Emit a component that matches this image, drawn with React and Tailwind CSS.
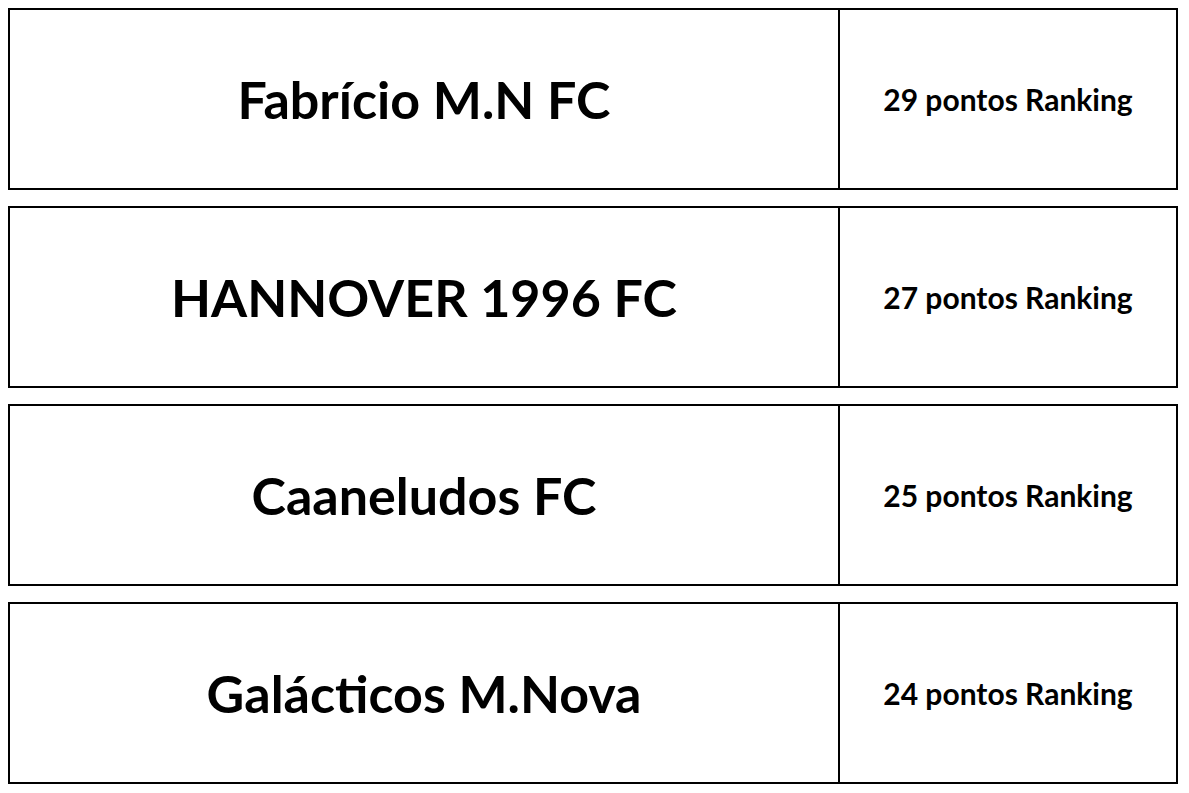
import React from 'react';

const teams = [
  { name: 'Fabrício M.N FC', points: 29 },
  { name: 'HANNOVER 1996 FC', points: 27 },
  { name: 'Caaneludos FC', points: 25 },
  { name: 'Galácticos M.Nova', points: 24 },
];

export default function App() {
  return (
    <div className="min-h-screen bg-white pt-2 pl-2 font-['Lato',sans-serif] text-black">
      <div className="flex w-[1170px] flex-col gap-4">
        {teams.map((t) => (
          <div key={t.name} className="flex h-[182px] border-2 border-black">
            <div className="flex w-[830px] items-center justify-center border-r-2 border-black">
              <span className="text-[52px] font-bold leading-none">{t.name}</span>
            </div>
            <div className="flex flex-1 items-center justify-center">
              <span className="text-[30px] font-bold leading-none">{t.points} pontos Ranking</span>
            </div>
          </div>
        ))}
      </div>
    </div>
  );
}
